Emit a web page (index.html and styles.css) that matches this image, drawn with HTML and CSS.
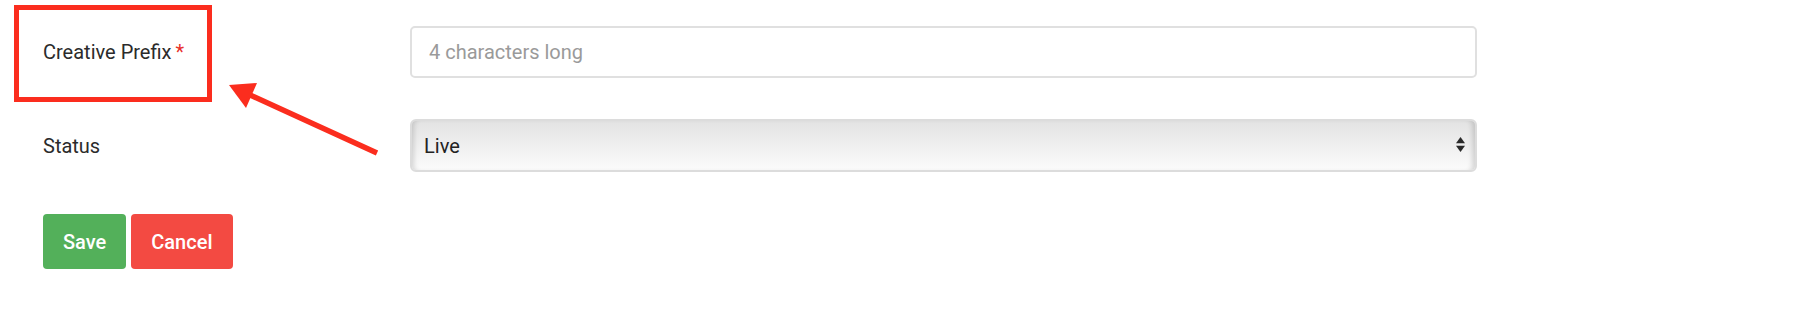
FILE: index.html
```html
<!DOCTYPE html>
<html lang="en">
<head>
<meta charset="utf-8">
<title>Creative form</title>
<link rel="stylesheet" href="styles.css">
</head>
<body>
<div class="page">
  <form class="form">
    <div class="row">
      <label class="label" for="prefix">Creative Prefix<span class="req">*</span></label>
      <input class="input" id="prefix" type="text" placeholder="4 characters long">
    </div>
    <div class="row">
      <label class="label" for="status">Status</label>
      <div class="select-wrap">
        <select class="select" id="status">
          <option>Live</option>
          <option>Paused</option>
        </select>
        <svg class="select-arrows" width="9" height="15" viewBox="0 0 9 15" aria-hidden="true">
          <polygon points="4.5,0 9,6.3 0,6.3" fill="#2a2a2a"/>
          <polygon points="0,8.7 9,8.7 4.5,15" fill="#2a2a2a"/>
        </svg>
      </div>
    </div>
    <div class="actions">
      <button type="button" class="btn btn-save">Save</button>
      <button type="button" class="btn btn-cancel">Cancel</button>
    </div>
  </form>

  <div class="annot-box"></div>
  <svg class="annot-arrow" width="400" height="170" viewBox="0 0 400 170" aria-hidden="true">
    <line x1="377" y1="153" x2="248" y2="94" stroke="#fb2d1e" stroke-width="5.5" stroke-linecap="butt"/>
    <polygon points="229,85 257,83 246,108" fill="#fb2d1e"/>
  </svg>
</div>
</body>
</html>
```
FILE: styles.css
```css
* { box-sizing: border-box; }

html, body {
  margin: 0;
  padding: 0;
  background: #ffffff;
}

body {
  font-family: Roboto, "Liberation Sans", Arial, sans-serif;
  color: #2b2b2b;
}

.page {
  position: relative;
  width: 1806px;
  height: 326px;
}

.form {
  padding: 26px 0 0 43px;
  display: flex;
  flex-direction: column;
  gap: 41px;
}

.row {
  display: grid;
  grid-template-columns: 367px 1067px;
  align-items: center;
}

.label {
  font-size: 20px;
  color: #2b2b2b;
  line-height: 24px;
}

.req {
  color: #e8302b;
  margin-left: 4px;
}

.input {
  height: 52px;
  width: 100%;
  border: 2px solid #e0e0e0;
  border-radius: 5px;
  padding: 0 17px;
  font-family: Roboto, "Liberation Sans", Arial, sans-serif;
  font-size: 20px;
  color: #2b2b2b;
  background: #fff;
  outline: none;
}

.input::placeholder {
  color: #9a9a9a;
}

.select-wrap {
  position: relative;
  height: 53px;
}

.select {
  -webkit-appearance: none;
  appearance: none;
  width: 100%;
  height: 100%;
  border: 2px solid #dcdcdc;
  border-radius: 6px;
  padding: 0 12px;
  font-family: Roboto, "Liberation Sans", Arial, sans-serif;
  font-size: 20px;
  color: #222;
  background: linear-gradient(#e3e3e3, #f0f0f0 55%, #fbfbfb);
  box-shadow: inset 5px 0 5px -3px rgba(0, 0, 0, 0.14),
              inset -6px 0 5px -3px rgba(0, 0, 0, 0.14);
  outline: none;
}

.select-arrows {
  position: absolute;
  right: 12px;
  top: 18px;
  pointer-events: none;
}

.actions {
  display: flex;
  gap: 5px;
  margin-top: 1px;
}

.btn {
  height: 55px;
  padding: 0 20px;
  border: none;
  border-radius: 4px;
  font-family: Roboto, "Liberation Sans", Arial, sans-serif;
  font-size: 20px;
  font-weight: 500;
  color: #fff;
}

.btn-save { background: #53b05a; }
.btn-cancel { background: #f34a42; }

.annot-box {
  position: absolute;
  left: 14px;
  top: 5px;
  width: 198px;
  height: 97px;
  border: 5px solid #fb2d1e;
}

.annot-arrow {
  position: absolute;
  left: 0;
  top: 0;
}
```
